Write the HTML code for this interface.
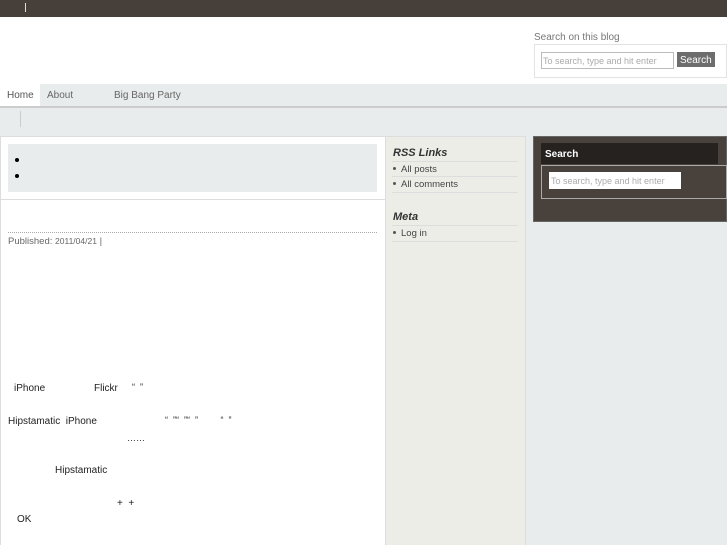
<!DOCTYPE html>
<html style="height:545px;overflow:hidden"><head><meta charset="utf-8"><style>
body{margin:0;width:727px;height:545px;position:relative;overflow:hidden;background:#e9ecec;font-family:"Liberation Sans","Noto Sans CJK JP",sans-serif;font-size:10px;color:#222}
div,span{position:absolute;box-sizing:border-box}
.t{white-space:nowrap}
</style></head><body>
<div style="left:0;top:0;width:727px;height:17px;background:#463f3a"></div>
<div style="left:25px;top:3px;width:1px;height:9px;background:#ddd"></div>
<div style="left:0;top:17px;width:727px;height:67px;background:#fff"></div>
<span class="t" style="left:534px;top:32px;color:#777;font-size:10px">Search on this blog</span>
<div style="left:534px;top:44px;width:193px;height:34px;border:1px solid #e3e3e3;background:#fff"></div>
<div style="left:541px;top:52px;width:133px;height:17px;border:1px solid #bbb;background:#fff"></div>
<span class="t" style="left:543px;top:56px;color:#aaa;font-size:9px">To search, type and hit enter</span>
<div style="left:677px;top:52px;width:38px;height:15px;background:#6d6d6d"></div>
<span class="t" style="left:680px;top:55px;color:#fff;font-size:10px">Search</span>
<div style="left:0;top:84px;width:40px;height:22px;background:#fff"></div>
<span class="t" style="left:7px;top:90px;color:#555;font-size:10px">Home</span>
<span class="t" style="left:47px;top:90px;color:#666;font-size:10px">About</span>
<span class="t" style="left:114px;top:90px;color:#666;font-size:10px">Big Bang Party</span>
<div style="left:0;top:106px;width:727px;height:2px;background:#ccc"></div>
<div style="left:20px;top:111px;width:1px;height:16px;background:#ccc"></div>
<div style="left:0;top:136px;width:386px;height:409px;background:#fff;border:1px solid #ddd;border-bottom:none"></div>
<div style="left:8px;top:144px;width:369px;height:48px;background:#e9ecec"></div>
<div style="left:15px;top:158px;width:4px;height:4px;border-radius:50%;background:#000"></div>
<div style="left:15px;top:174px;width:4px;height:4px;border-radius:50%;background:#000"></div>
<div style="left:1px;top:199px;width:384px;height:1px;background:#ddd"></div>
<div style="left:8px;top:232px;width:369px;height:0;border-top:1px dotted #aaa"></div>
<span class="t" style="left:8px;top:236px;color:#666;font-size:9.5px">Published: <span style="position:static;font-size:8.5px">2011/04/21</span> |</span>
<span class="t" style="left:14px;top:383px;font-size:10px">iPhone</span>
<span class="t" style="left:94px;top:383px;font-size:10px">Flickr</span>
<span class="t" style="left:132px;top:382px;font-size:9px">“&nbsp;&nbsp;”</span>
<span class="t" style="left:8px;top:416px;font-size:10px">Hipstamatic&nbsp;&nbsp;iPhone</span>
<span class="t" style="left:165px;top:415px;font-size:9px">“&nbsp;&nbsp;”“&nbsp;&nbsp;”“&nbsp;&nbsp;”&nbsp;&nbsp;&nbsp;&nbsp;&nbsp;&nbsp;&nbsp;&nbsp;&nbsp;“&nbsp;&nbsp;”</span>
<span class="t" style="left:127px;top:433px;font-size:9px">……</span>
<span class="t" style="left:55px;top:465px;font-size:10px">Hipstamatic</span>
<span class="t" style="left:117px;top:498px;font-size:10px">+&nbsp;&nbsp;+</span>
<span class="t" style="left:17px;top:514px;font-size:10px">OK</span>
<div style="left:385px;top:136px;width:141px;height:409px;background:#edede8;border:1px solid #ddd;border-bottom:none"></div>
<span class="t" style="left:393px;top:147px;font-size:11px;font-weight:bold;font-style:italic;color:#333">RSS Links</span>
<div style="left:392px;top:161px;width:126px;height:1px;background:#ddd"></div>
<div style="left:393px;top:167px;width:3px;height:3px;border-radius:50%;background:#555"></div>
<span class="t" style="left:401px;top:164px;font-size:9.5px;color:#444">All posts</span>
<div style="left:392px;top:176px;width:126px;height:1px;background:#ddd"></div>
<div style="left:393px;top:182px;width:3px;height:3px;border-radius:50%;background:#555"></div>
<span class="t" style="left:401px;top:179px;font-size:9.5px;color:#444">All comments</span>
<div style="left:392px;top:192px;width:126px;height:1px;background:#ddd"></div>
<span class="t" style="left:393px;top:211px;font-size:11px;font-weight:bold;font-style:italic;color:#333">Meta</span>
<div style="left:392px;top:225px;width:126px;height:1px;background:#ddd"></div>
<div style="left:393px;top:231px;width:3px;height:3px;border-radius:50%;background:#555"></div>
<span class="t" style="left:401px;top:228px;font-size:9.5px;color:#444">Log in</span>
<div style="left:392px;top:241px;width:126px;height:1px;background:#ddd"></div>
<div style="left:533px;top:136px;width:194px;height:86px;background:#48413c;border:1px solid #666"></div>
<div style="left:541px;top:143px;width:177px;height:21px;background:#252220"></div>
<span class="t" style="left:545px;top:149px;font-size:10px;font-weight:bold;color:#fff">Search</span>
<div style="left:541px;top:165px;width:186px;height:34px;border:1px solid #aaa"></div>
<div style="left:549px;top:172px;width:132px;height:17px;background:#fff"></div>
<span class="t" style="left:551px;top:176px;color:#aaa;font-size:9px">To search, type and hit enter</span>
</body></html>
